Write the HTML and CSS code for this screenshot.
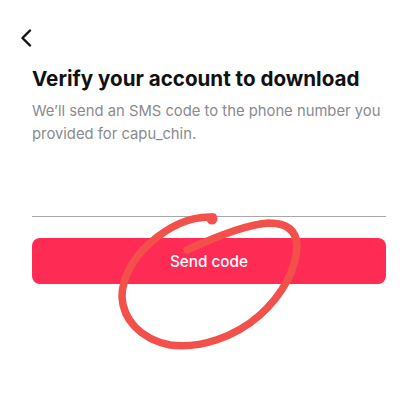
FILE: index.html
```html
<!DOCTYPE html>
<html lang="en">
<head>
<meta charset="utf-8">
<title>Verify your account</title>
<link rel="stylesheet" href="styles.css">
</head>
<body>
<div class="page">
  <header class="topbar">
    <button class="back" aria-label="Back">
      <svg width="12" height="18" viewBox="0 0 12 18"><path d="M10 1.5 L2.5 9 L10 16.5" fill="none" stroke="#111" stroke-width="2.4" stroke-linecap="round" stroke-linejoin="round"/></svg>
    </button>
  </header>
  <main class="content">
    <h1 class="title">Verify your account to download</h1>
    <p class="subtitle">We’ll send an SMS code to the phone number you provided for capu_chin.</p>
    <div class="field"></div>
    <button class="send">Send code</button>
  </main>
  <svg class="scribble" width="418" height="417" viewBox="0 0 418 417">
    <path d="M213 217 C 190 216, 168 227, 150 243 C 132 259, 122 279, 122 297 C 123 319, 140 339, 170 345 C 200 349, 235 337, 260 315 C 282 295, 297 269, 297 245 C 296 229, 285 223, 269 223 C 251 224, 226 232, 187 250" fill="none" stroke="#f4504b" stroke-width="7.5" stroke-linecap="round" stroke-linejoin="round"/>
    <circle cx="212" cy="219" r="5.5" fill="#f4504b"/>
  </svg>
</div>
</body>
</html>
```
FILE: styles.css
```css
* { box-sizing: border-box; }
html, body { margin: 0; padding: 0; background: #fff; }
body { font-family: "Inter", "Liberation Sans", sans-serif; }
.page { position: relative; width: 418px; height: 417px; overflow: hidden; }
.topbar { height: 58px; padding: 29px 0 0 20px; }
.back { border: 0; background: none; padding: 0; margin: 0; display: block; width: 12px; height: 18px; }
.back svg { display: block; }
.content { padding: 0 32px; }
.title { margin: 8px 0 0; font-size: 20.6px; font-weight: 700; color: #111; line-height: 26px; }
.subtitle { margin: 8px 0 0; font-size: 14.8px; line-height: 23px; color: #8a8a8e; }
.field { margin-top: 70px; height: 1px; background: #a8a8a8; }
.send { display: block; width: 100%; margin-top: 21px; height: 46px; border: 0; border-radius: 8px; background: #fe2b54; color: #fff; font-family: "Inter", "Liberation Sans", sans-serif; font-size: 15.3px; font-weight: 500; }
.scribble { position: absolute; left: 0; top: 0; pointer-events: none; }
```
